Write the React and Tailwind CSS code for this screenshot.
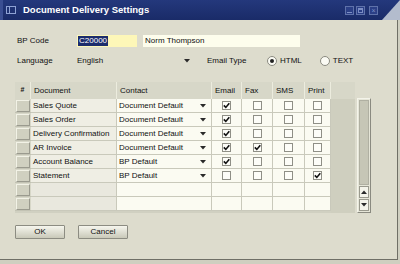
import React from "react";

const rows = [
	{ doc: "Sales Quote", contact: "Document Default", email: true },
	{ doc: "Sales Order", contact: "Document Default", email: true },
	{ doc: "Delivery Confirmation", contact: "Document Default", email: true },
	{ doc: "AR Invoice", contact: "Document Default", email: true, fax: true },
	{ doc: "Account Balance", contact: "BP Default", email: true },
	{ doc: "Statement", contact: "BP Default", print: true },
	null,
	null,
];

const cols = "grid grid-cols-[16px_86px_95px_30px_31px_32px_26px]";

const Arrow = ({ up }) => (
	<svg width="6" height="4" viewBox="0 0 6 4" className={up ? "rotate-180" : ""}>
		<path d="M0 0 H6 L3 3.5 Z" fill="#2a2a2a" />
	</svg>
);

const Check = ({ checked }) => (
	<div className="w-[9px] h-[9px] border border-[#8f8f86] bg-[#fdfdf8] flex items-center justify-center">
		{checked && (
			<svg width="7" height="7" viewBox="0 0 7 7">
				<path d="M0.8 3.4 L2.8 5.4 L6.3 1.2" stroke="#111" strokeWidth="1.6" fill="none" />
			</svg>
		)}
	</div>
);

const Radio = ({ on }) => (
	<div className="w-[10px] h-[10px] rounded-full border border-[#8a8a80] bg-[#fbfbf4] flex items-center justify-center">
		{on && <div className="w-[4px] h-[4px] rounded-full bg-[#222]" />}
	</div>
);

const TitleBar = () => (
	<div className="relative h-[20px] bg-gradient-to-b from-[#24387c] to-[#1a2b68] flex items-center">
		<div className="w-[3px] h-full bg-[#3a4e92]" />
		{/* window icon */}
		<div className="ml-[3px] w-[10px] h-[8px] border border-[#8fa2d4] flex">
			<div className="w-[3px] h-full border-r border-[#8fa2d4]" />
		</div>
		<span className="ml-[7px] text-white font-bold text-[9.5px]">Document Delivery Settings</span>
		<div className="ml-auto mr-[22px] flex gap-[2px]">
			<div className="w-[9px] h-[9px] border border-[#5f72aa] bg-[#2b3f86] flex items-end justify-center pb-[1px]">
				<div className="w-[5px] h-[1px] bg-[#7c8ec4]" />
			</div>
			<div className="w-[9px] h-[9px] border border-[#5f72aa] bg-[#2b3f86] flex items-center justify-center">
				<div className="w-[5px] h-[5px] border border-[#7c8ec4] border-t-2" />
			</div>
			<div className="ml-[2px] w-[9px] h-[9px] border border-[#5f72aa] bg-[#2b3f86] flex items-center justify-center text-[#7c8ec4] text-[7px] leading-none">
				×
			</div>
		</div>
		{/* slanted corner */}
		<div className="absolute right-0 top-0 w-0 h-0 border-t-[20px] border-t-transparent border-r-[18px] border-r-[#b3bccd]" />
	</div>
);

export default function App() {
	return (
		<div className="w-[400px] h-[264px] bg-[#cfcfc0] overflow-hidden font-['Liberation_Sans',Arial,sans-serif] text-[8px] text-[#111]">
			<TitleBar />
			<div className="w-[398px] h-[240px] bg-[#dddccd] border-r border-b border-[#6f6f66] pl-[15px] pt-[15px]">
				{/* BP Code */}
				<div className="flex items-center h-[12px]">
					<span className="pl-[2px] w-[62px]">BP Code</span>
					<div className="w-[60px] h-[12px] bg-[#fdf7b8] flex items-center pl-[1px]">
						<span className="bg-[#1c2c6c] text-white px-[1px] leading-[10px]">C20000</span>
					</div>
					<div className="ml-[6px] w-[157px] h-[12px] bg-[#fdfdec] flex items-center pl-[2px]">
						Norm Thompson
					</div>
				</div>

				{/* Language / Email Type */}
				<div className="flex items-center h-[12px] mt-[8px]">
					<span className="pl-[2px] w-[62px]">Language</span>
					<div className="w-[116px] flex items-center">
						<span>English</span>
						<div className="ml-auto mr-[3px]">
							<Arrow />
						</div>
					</div>
					<span className="ml-[14px] w-[60px]">Email Type</span>
					<Radio on />
					<span className="ml-[3px]">HTML</span>
					<div className="ml-[18px]">
						<Radio />
					</div>
					<span className="ml-[3px]">TEXT</span>
				</div>

				{/* Table */}
				<div className="flex mt-[15px]">
					<div className="flex bg-[#d0d0c1]">
						<div className="w-[316px]">
							<div className={`${cols} h-[17px] bg-[#d7d7c8] items-stretch`}>
								{["#", "Document", "Contact", "Email", "Fax", "SMS", "Print"].map((h, i) => (
									<div
										key={h}
										className={`flex items-center border-r border-[#ececde] ${i === 0 ? "justify-center text-[7px] font-bold" : "pl-[3px]"}`}
									>
										{h}
									</div>
								))}
							</div>
							{rows.map((r, i) => (
								<div key={i} className={`${cols} h-[14px]`}>
									<div className="bg-[#d7d7c8] flex items-center justify-center border-b border-[#c3c3b4]">
										<div className="w-[14px] h-[12px] bg-[#d0d0c0] border-t border-l border-[#f2f2e6] border-r border-b border-r-[#9a9a8e] border-b-[#9a9a8e]" />
									</div>
									<div className={`pl-[2px] flex items-center border-r border-b border-[#c9c9bb] ${r ? "bg-[#efeee4]" : "bg-[#e9e8de]"}`}>
										{r && r.doc}
									</div>
									<div className="pl-[2px] flex items-center border-r border-b border-[#c9c9bb] bg-[#fbfbf2]">
										{r && r.contact}
										{r && (
											<div className="ml-auto mr-[5px]">
												<Arrow />
											</div>
										)}
									</div>
									{["email", "fax", "sms", "print"].map((k) => (
										<div key={k} className="flex items-center justify-center border-r border-b border-[#c9c9bb] bg-[#fbfbf2]">
											{r && <Check checked={!!r[k]} />}
										</div>
									))}
								</div>
							))}
						</div>
						<div className="w-[24px] bg-[#cfcfbf]">
							<div className="h-[17px] bg-[#d7d7c8]" />
						</div>
					</div>

					{/* Scrollbar */}
					<div className="ml-[2px] mt-[16px] w-[14px] h-[115px] border border-t-[#f4f4ea] border-l-[#f4f4ea] border-r-[#8a8a80] border-b-[#8a8a80] bg-[#e6e6d8] flex flex-col p-[1px]">
						<div className="flex-1 bg-[#c6c6b6] border border-[#b0b0a2]" />
						<div className="mt-[1px] h-[12px] bg-[#f4f4ea] border border-[#9a9a8e] flex items-center justify-center">
							<Arrow up />
						</div>
						<div className="mt-[1px] h-[12px] bg-[#f4f4ea] border border-[#9a9a8e] flex items-center justify-center">
							<Arrow />
						</div>
					</div>
				</div>

				{/* Buttons */}
				<div className="flex gap-[13px] mt-[12px]">
					{["OK", "Cancel"].map((b) => (
						<button
							key={b}
							className="w-[50px] h-[14px] bg-gradient-to-b from-[#f6f6ee] to-[#c9c9b9] border border-[#8c8c82] rounded-[1px] text-[8px] flex items-center justify-center"
						>
							{b}
						</button>
					))}
				</div>
			</div>
		</div>
	);
}
